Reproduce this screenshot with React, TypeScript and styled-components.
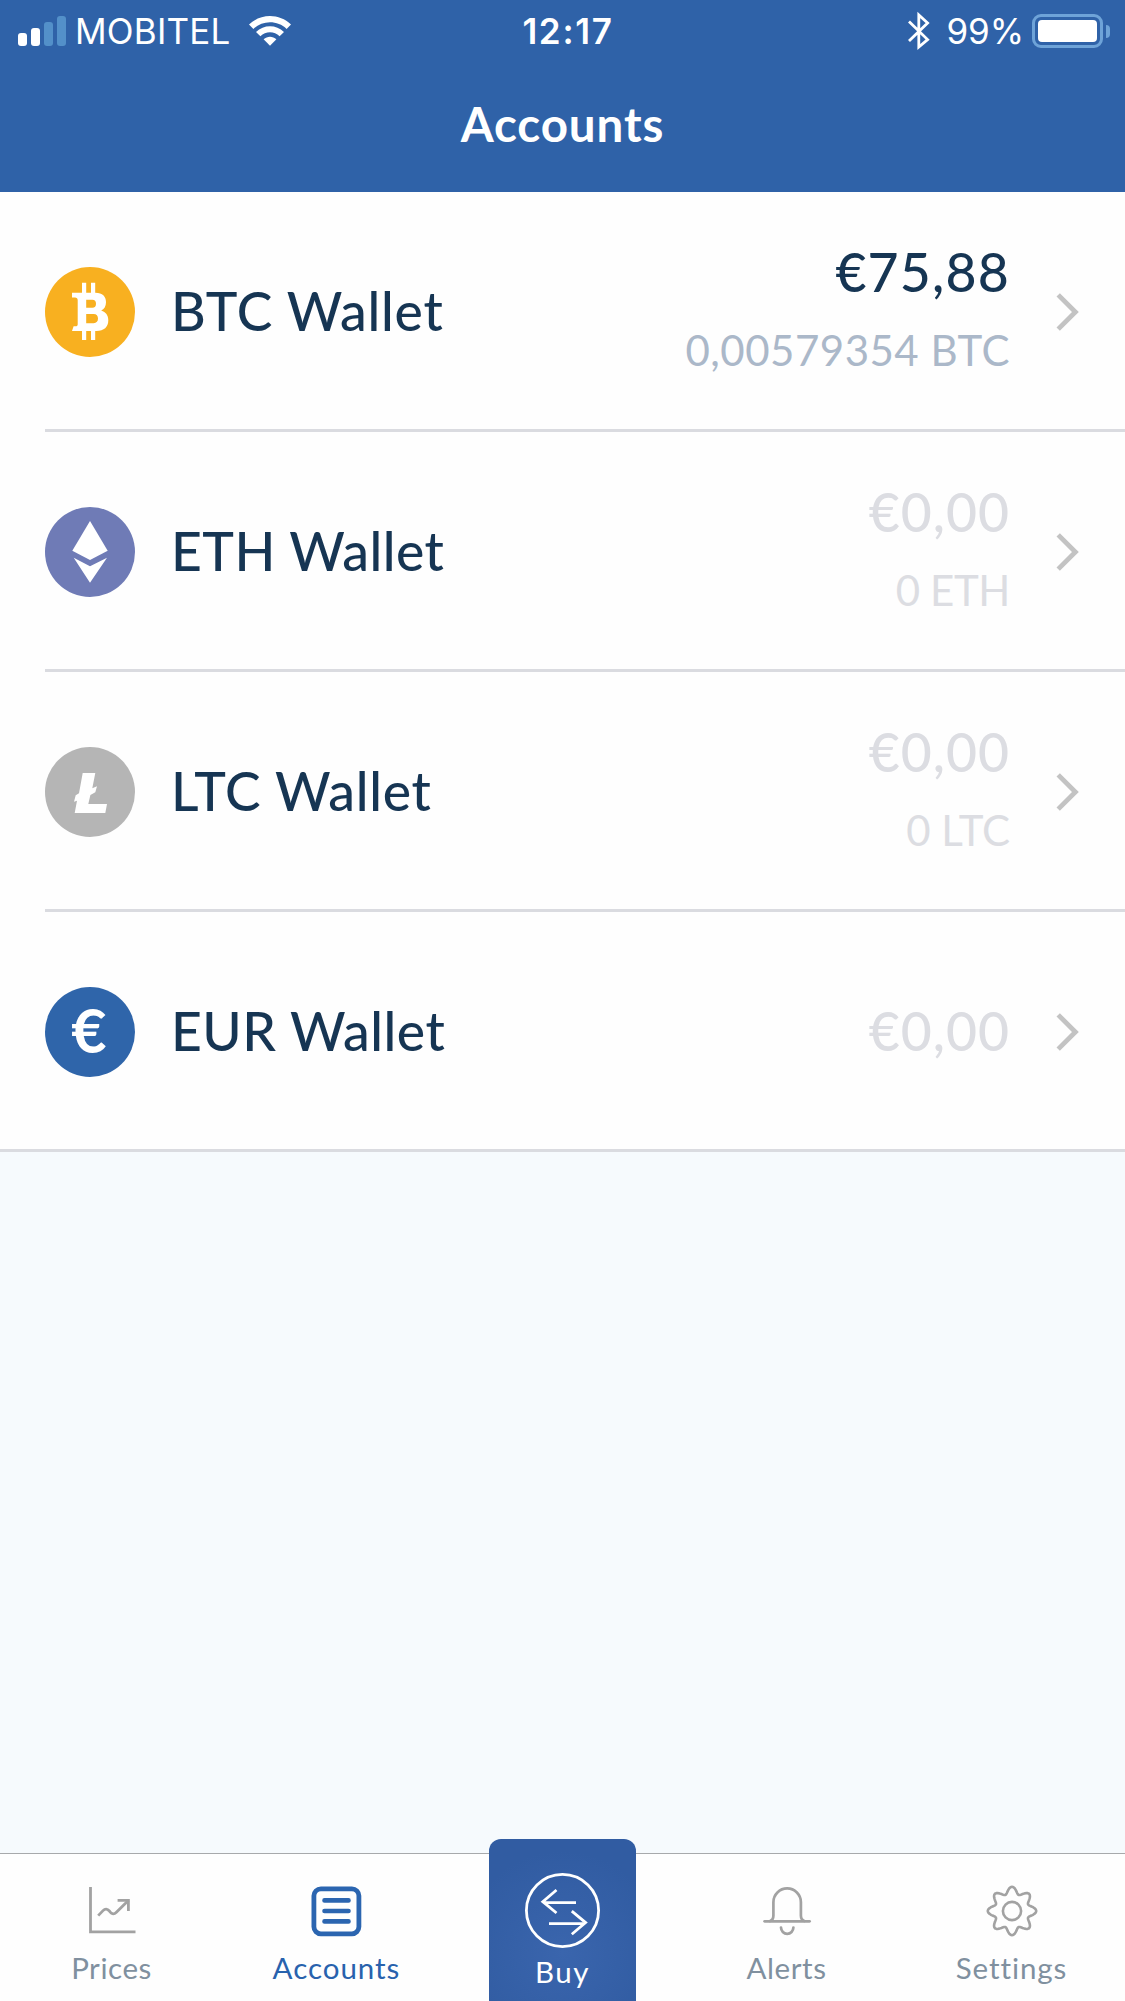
import React from "react";
import styled, { createGlobalStyle } from "styled-components";

const GlobalStyle = createGlobalStyle`
  * { box-sizing: border-box; }
  body { margin: 0; }
  svg { display: block; overflow: visible; flex: none; }
`;

const brand = "#2f62a8";
const lato = `Lato, "Open Sans", sans-serif`;
const inter = `Inter, Roboto, sans-serif`;

const Screen = styled.div`
  display: flex;
  flex-direction: column;
  width: 1125px;
  height: 2001px;
  background: #f6fafd;
  font-family: ${lato};
  overflow: hidden;
`;

/* Header */

const Header = styled.header`
  height: 192px;
  flex: none;
  background: ${brand};
  color: #fff;
`;

const StatusBar = styled.div`
  display: grid;
  grid-template-columns: 1fr auto 1fr;
  align-items: center;
  height: 62px;
  padding: 0 15px 0 18px;
  font-family: ${inter};
  font-size: 35px;
  line-height: 44px;
`;

const StatusGroup = styled.div<{ $end?: boolean }>`
  display: flex;
  align-items: center;
  justify-content: ${(p) => (p.$end ? "flex-end" : "flex-start")};
`;

const Signal = styled.div`
  display: flex;
  align-items: flex-end;
  gap: 4px;
  height: 30px;
  margin-right: 9px;
`;

const SignalBar = styled.i<{ $h: number; $on: boolean }>`
  width: 9px;
  height: ${(p) => p.$h}px;
  border-radius: 3px;
  background: ${(p) => (p.$on ? "#fff" : "#5390c9")};
`;

const Carrier = styled.span`
  font-weight: 400;
  letter-spacing: 0.2px;
  margin-right: 18px;
`;

const Clock = styled.span`
  font-weight: 600;
  letter-spacing: 1.7px;
  padding-left: 8px;
`;

const Percent = styled.span`
  font-weight: 400;
  letter-spacing: -0.1px;
  margin: 0 8px 0 17px;
`;

const Battery = styled.div`
  display: flex;
  width: 71px;
  height: 34px;
  padding: 3px;
  border: 3px solid #6ea3d8;
  border-radius: 9px;
`;

const BatteryLevel = styled.div`
  flex: 1;
  border-radius: 4px;
  background: #fff;
`;

const BatteryNub = styled.div`
  width: 4px;
  height: 13px;
  margin-left: 3px;
  border-radius: 0 4px 4px 0;
  background: #6ea3d8;
`;

const Title = styled.h1`
  margin: 0;
  padding-top: 32px;
  font-size: 47.5px;
  line-height: 60px;
  font-weight: 700;
  letter-spacing: 0.9px;
  text-align: center;
`;

/* Wallet list */

const List = styled.main`
  flex: none;
  background: #fefefe;
  border-bottom: 3px solid #dadbe0;
`;

const Row = styled.div`
  display: flex;
  align-items: center;
  height: 240px;
  margin-left: 45px;
  padding: 3px 45px 0 0;
  border-bottom: 3px solid #dadbe0;

  &:last-child {
    height: 237px;
    border-bottom: 0;
  }
`;

const Coin = styled.div<{ $color: string }>`
  display: flex;
  align-items: center;
  justify-content: center;
  flex: none;
  width: 90px;
  height: 90px;
  margin-right: 36px;
  border-radius: 50%;
  background: ${(p) => p.$color};
  color: #fff;
`;

const EuroSign = styled.span`
  font-size: 61px;
  line-height: 90px;
  font-weight: 700;
  padding: 0 2px 4px 0;
`;

const Name = styled.div<{ $track: number }>`
  flex: 1;
  padding-bottom: 5px;
  font-size: 53.5px;
  line-height: 64px;
  font-weight: 500;
  letter-spacing: ${(p) => p.$track}px;
  color: #163553;
`;

const Values = styled.div`
  display: flex;
  flex-direction: column;
  align-items: flex-end;
  padding-bottom: 3px;
  margin-right: 46px;
  line-height: 78.5px;
`;

const Fiat = styled.div<{ $empty: boolean; $track: number }>`
  font-size: 53.5px;
  font-weight: 500;
  letter-spacing: ${(p) => p.$track}px;
  color: ${(p) => (p.$empty ? "#dcdde2" : "#163553")};
`;

const Crypto = styled.div<{ $empty: boolean; $track: number }>`
  font-size: 42px;
  letter-spacing: ${(p) => p.$track}px;
  color: ${(p) => (p.$empty ? "#dcdde2" : "#abb8c9")};
`;

/* Tab bar */

const TabBar = styled.nav`
  display: grid;
  grid-template-columns: repeat(5, 1fr);
  height: 148px;
  margin-top: auto;
  border-top: 1px solid #a7a9ab;
  background: #fefefe;
`;

const Tab = styled.div<{ $active?: boolean }>`
  display: flex;
  flex-direction: column;
  align-items: center;
  gap: 12px;
  padding: 31px 2px 0 0;
  color: ${(p) => (p.$active ? "#2862ad" : "#80909f")};
`;

const TabLabel = styled.span<{ $track: number }>`
  font-size: 29.5px;
  line-height: 37px;
  letter-spacing: ${(p) => p.$track}px;
`;

const BuyTab = styled.div`
  display: flex;
  flex-direction: column;
  align-items: center;
  justify-self: center;
  gap: 5px;
  width: 147px;
  height: 162px;
  margin-top: -15px;
  padding-top: 34px;
  border-radius: 12px 12px 0 0;
  background: radial-gradient(circle at 50% 70%, #3a65ad 0%, #315ca2 75%);
  color: #fff;
`;

/* Icons */

const WifiIcon = () => (
  <svg width="42" height="30" viewBox="0 0 42 30" fill="#fff">
    <path d="M0 8.6C11.5-2.8 30.5-2.8 42 8.6L37.6 12.9C28.7 4 13.3 4 4.4 12.9Z" />
    <path d="M7 16C14.8 8.3 27.2 8.3 35 16L30.6 20.3C25.4 15 16.6 15 11.4 20.3Z" />
    <path d="M14.6 23.2C18.2 19.8 23.8 19.8 27.4 23.2L21 29.8Z" />
  </svg>
);

const BluetoothIcon = () => (
  <svg width="22" height="38" viewBox="0 0 22 38" fill="none" stroke="#fff" strokeWidth="2.8">
    <path d="M1 9.5L19.6 27.6L10.8 35V3L19.6 11L1 29" />
  </svg>
);

const ChevronIcon = () => (
  <svg width="24" height="38" viewBox="0 0 24 38" fill="none" stroke="#c3c3c3" strokeWidth="4.8">
    <path d="M2.2 1.9L19.4 19L2.2 36.1" />
  </svg>
);

const BitcoinIcon = () => (
  <svg width="90" height="90" viewBox="0 0 90 90" fill="#fff">
    <path d="M37 15.7H41.2V27H37ZM46 15.7H50.2V27H46ZM37 62H41.2V73H37ZM46 62H50.2V73H46Z" />
    <path
      fillRule="evenodd"
      d="M27 25.8H50.5C57.5 25.8 61 29.5 61 35.2C61 39.3 59.2 42 56.2 43.6C60.8 45 63.3 48.6 63.3 53.2C63.3 60 59 63.9 51.5 63.9H27L28.6 59.3H30.6C32 59.3 32.7 58.6 32.7 57.2V33.2C32.7 31.4 31.7 30.4 30 30.4H27ZM41.2 32.8V40.8H47.4C49.8 40.8 51 39.2 51 36.8C51 34.4 49.8 32.8 47.4 32.8ZM41.2 47V56.2H48.6C51.6 56.2 53 54.4 53 51.6C53 48.8 51.6 47 48.6 47Z"
    />
  </svg>
);

const EthereumIcon = () => (
  <svg width="90" height="90" viewBox="0 0 90 90" fill="#fff">
    <path d="M45 14L62.7 43.7L45 53L27.3 43.7Z" />
    <path d="M28.7 50.8L45 59.3L62 50.8L45 75.7Z" />
  </svg>
);

const LitecoinIcon = () => (
  <svg width="90" height="90" viewBox="0 0 90 90" fill="#fff">
    <path d="M37.7 26H50.3L47.3 41.3L52 39.3L50.3 45.3L45.4 48L43.3 57H62L60.3 66H29.7L32 53.7L29 54.7L30.7 48.3L34 46.3Z" />
  </svg>
);

const PricesIcon = () => (
  <svg width="52" height="52" viewBox="0 0 52 52" fill="none" stroke="#a2a2a2" strokeWidth="2.8">
    <path d="M4.5 2V46.8H49.5" />
    <path d="M12.2 30.6L17 25.6Q20.2 22.4 23.4 26L24 26.8Q27 30.6 30.4 27.2L42.6 15.2" />
    <path d="M31.6 15.4H42.4V26" />
  </svg>
);

const AccountsIcon = () => (
  <svg width="52" height="52" viewBox="0 0 52 52" fill="none" stroke="#2b65b0" strokeLinecap="round">
    <rect x="2.9" y="3.8" width="45" height="45" rx="7" strokeWidth="4.8" />
    <path d="M13.5 15.4H37.5M13.5 26H37.5M13.5 36.4H37.5" strokeWidth="4.6" />
  </svg>
);

const BuyIcon = () => (
  <svg width="75" height="75" viewBox="0 0 75 75" fill="none" stroke="#fff" strokeWidth="2.8">
    <circle cx="37.5" cy="37.5" r="36.1" />
    <path d="M18.5 29.6H51M31.5 17L17.8 28.7L31.5 40" />
    <path d="M24 50.7H58M46.8 38.2L60.6 49.6L46.8 61.2" />
  </svg>
);

const BellIcon = () => (
  <svg width="52" height="52" viewBox="0 0 52 52" fill="none" stroke="#a2a2a2" strokeWidth="2.7" strokeLinecap="round">
    <path d="M3.6 36.3H48.6" />
    <path d="M9 36C11.4 35.4 12.4 33.6 12.4 30.6V17.2A13.75 13.75 0 0 1 39.9 17.2V30.6C39.9 33.6 41 35.4 43.4 36" />
    <path d="M20 42.6A6.2 6.2 0 0 0 32.4 42.6" />
  </svg>
);

const gearPath =
  Array.from({ length: 192 }, (_, i) => {
    const a = (i / 192) * Math.PI * 2;
    const r = 20.8 + 3.4 * Math.cos(8 * a);
    return `${i ? "L" : "M"}${(26 + r * Math.cos(a)).toFixed(2)} ${(26 + r * Math.sin(a)).toFixed(2)}`;
  }).join("") + "Z";

const GearIcon = () => (
  <svg width="52" height="52" viewBox="0 0 52 52" fill="none" stroke="#a2a2a2" strokeWidth="2.6">
    <path d={gearPath} strokeLinejoin="round" />
    <circle cx="26" cy="26" r="9.1" />
  </svg>
);

/* Data */

const wallets = [
  { name: "BTC Wallet", track: 0.75, color: "#f8b020", icon: <BitcoinIcon />, fiat: "€75,88", fiatTrack: 1.2, crypto: "0,00579354 BTC", cryptoTrack: 0.5 },
  { name: "ETH Wallet", track: 0.45, color: "#6f7bb6", icon: <EthereumIcon />, fiat: "€0,00", fiatTrack: 1, crypto: "0 ETH", cryptoTrack: -0.4 },
  { name: "LTC Wallet", track: 0.7, color: "#b5b5b5", icon: <LitecoinIcon />, fiat: "€0,00", fiatTrack: 1, crypto: "0 LTC", cryptoTrack: -0.1 },
  { name: "EUR Wallet", track: 0.5, color: "#2f65aa", icon: <EuroSign>€</EuroSign>, fiat: "€0,00", fiatTrack: 1 },
];

export default function App() {
  return (
    <Screen>
      <GlobalStyle />
      <Header>
        <StatusBar>
          <StatusGroup>
            <Signal>
              <SignalBar $h={13} $on />
              <SignalBar $h={18} $on />
              <SignalBar $h={24} $on={false} />
              <SignalBar $h={30} $on={false} />
            </Signal>
            <Carrier>MOBITEL</Carrier>
            <WifiIcon />
          </StatusGroup>
          <Clock>12:17</Clock>
          <StatusGroup $end>
            <BluetoothIcon />
            <Percent>99%</Percent>
            <Battery>
              <BatteryLevel />
            </Battery>
            <BatteryNub />
          </StatusGroup>
        </StatusBar>
        <Title>Accounts</Title>
      </Header>

      <List>
        {wallets.map((w) => (
          <Row key={w.name}>
            <Coin $color={w.color}>{w.icon}</Coin>
            <Name $track={w.track}>{w.name}</Name>
            <Values>
              <Fiat $empty={w.fiat === "€0,00"} $track={w.fiatTrack}>{w.fiat}</Fiat>
              {w.crypto && (
                <Crypto $empty={w.fiat === "€0,00"} $track={w.cryptoTrack ?? 0}>{w.crypto}</Crypto>
              )}
            </Values>
            <ChevronIcon />
          </Row>
        ))}
      </List>

      <TabBar>
        <Tab>
          <PricesIcon />
          <TabLabel $track={0.55}>Prices</TabLabel>
        </Tab>
        <Tab $active>
          <AccountsIcon />
          <TabLabel $track={0.97}>Accounts</TabLabel>
        </Tab>
        <BuyTab>
          <BuyIcon />
          <TabLabel $track={1.5}>Buy</TabLabel>
        </BuyTab>
        <Tab>
          <BellIcon />
          <TabLabel $track={0.6}>Alerts</TabLabel>
        </Tab>
        <Tab>
          <GearIcon />
          <TabLabel $track={0.9}>Settings</TabLabel>
        </Tab>
      </TabBar>
    </Screen>
  );
}
